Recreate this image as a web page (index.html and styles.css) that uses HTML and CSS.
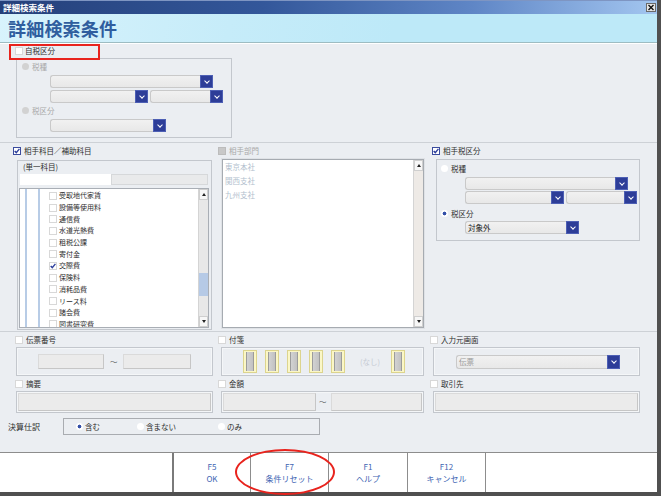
FILE: index.html
```html
<!DOCTYPE html>
<html lang="ja">
<head>
<meta charset="utf-8">
<title>詳細検索条件</title>
<link rel="stylesheet" href="styles.css">
</head>
<body>
<div class="window">
  <div class="titlebar">
    <span class="tb-text">詳細検索条件</span>
    <span class="close"><svg width="8" height="7" viewBox="0 0 8 7"><path d="M1.5 1 L6.5 6 M6.5 1 L1.5 6" stroke="#111" stroke-width="1.4"/></svg></span>
  </div>
  <div class="header"><h1>詳細検索条件</h1></div>
  <div class="body">
    <section class="sec1">
      <div class="chk-row"><i class="cb"></i><span>自税区分</span></div>
      <div class="grp grp1">
        <div class="radio-row"><i class="rb dis"></i><span class="dis-t">税種</span></div>
        <div class="sel-row mt3"><div class="sel w163"><span class="sv"></span><i class="dd"></i></div></div>
        <div class="sel-row mt2"><div class="sel w98"><span class="sv"></span><i class="dd"></i></div><div class="sel w73"><span class="sv"></span><i class="dd"></i></div></div>
        <div class="radio-row mt2"><i class="rb dis"></i><span class="dis-t">税区分</span></div>
        <div class="sel-row mt3"><div class="sel w116"><span class="sv"></span><i class="dd"></i></div></div>
      </div>
      <div class="redbox"></div>
    </section>

    <section class="sec2">
      <div class="col c1">
        <div class="col-head"><svg class="cbx" width="8" height="8" viewBox="0 0 8 8"><rect x=".5" y=".5" width="7" height="7" fill="#fff" stroke="#3b4c9e"/><path d="M1.7 3.9 3.3 5.6 6.4 1.9" fill="none" stroke="#2d3f9c" stroke-width="1.4"/></svg><span>相手科目／補助科目</span></div>
        <div class="grp kamoku">
          <div class="tanitsu">(単一科目)</div>
          <div class="inrow"><span class="in-white"></span><span class="in-gray"></span></div>
          <div class="list1">
            <div class="items">
              <div class="item"><i class="cb"></i><span>受取地代家賃</span></div>
              <div class="item"><i class="cb"></i><span>設備等使用料</span></div>
              <div class="item"><i class="cb"></i><span>通信費</span></div>
              <div class="item"><i class="cb"></i><span>水道光熱費</span></div>
              <div class="item"><i class="cb"></i><span>租税公課</span></div>
              <div class="item"><i class="cb"></i><span>寄付金</span></div>
              <div class="item"><svg class="cbx" width="8" height="8" viewBox="0 0 8 8"><rect x=".5" y=".5" width="7" height="7" fill="#fff" stroke="#d6d6d6"/><path d="M1.7 3.9 3.3 5.6 6.4 1.9" fill="none" stroke="#2d3f9c" stroke-width="1.4"/></svg><span>交際費</span></div>
              <div class="item"><i class="cb"></i><span>保険料</span></div>
              <div class="item"><i class="cb"></i><span>消耗品費</span></div>
              <div class="item"><i class="cb"></i><span>リース料</span></div>
              <div class="item"><i class="cb"></i><span>諸会費</span></div>
              <div class="item"><i class="cb"></i><span>図書研究費</span></div>
            </div>
            <div class="vs">
              <span class="vs-btn"><i class="up"></i></span>
              <span class="thumb"></span>
              <span class="vs-btn down"><i class="dn"></i></span>
            </div>
          </div>
        </div>
      </div>

      <div class="col c2">
        <div class="col-head"><i class="cb dis"></i><span class="dis-t">相手部門</span></div>
        <div class="bumon">
          <div class="items2">
            <div class="item2">東京本社</div>
            <div class="item2">関西支社</div>
            <div class="item2">九州支社</div>
          </div>
          <div class="vs vs2">
            <span class="vs-btn"><i class="up"></i></span>
            <span class="vs-btn down"><i class="dn"></i></span>
          </div>
        </div>
      </div>

      <div class="col c3">
        <div class="col-head"><svg class="cbx" width="8" height="8" viewBox="0 0 8 8"><rect x=".5" y=".5" width="7" height="7" fill="#fff" stroke="#3b4c9e"/><path d="M1.7 3.9 3.3 5.6 6.4 1.9" fill="none" stroke="#2d3f9c" stroke-width="1.4"/></svg><span>相手税区分</span></div>
        <div class="grp zeiku">
          <div class="radio-row"><i class="rb"></i><span>税種</span></div>
          <div class="sel-row ml24 mt3"><div class="sel w163"><span class="sv"></span><i class="dd"></i></div></div>
          <div class="sel-row ml24 mt1"><div class="sel w99"><span class="sv"></span><i class="dd"></i></div><div class="sel w71"><span class="sv"></span><i class="dd"></i></div></div>
          <div class="radio-row mt4"><i class="rb on"></i><span>税区分</span></div>
          <div class="sel-row ml24 mt2"><div class="sel w114"><span class="sv dark">対象外</span><i class="dd"></i></div></div>
        </div>
      </div>
    </section>

    <section class="sec3">
      <div class="cell k1">
        <div class="lbl"><i class="cb"></i><span>伝票番号</span></div>
        <div class="box tall pl21">
          <span class="inp w66"></span><span class="tl">～</span><span class="inp w68"></span>
        </div>
      </div>
      <div class="cell k2">
        <div class="lbl"><i class="cb"></i><span>付箋</span></div>
        <div class="box tall pl21 tags">
          <span class="tag"><i></i></span>
          <span class="tag"><i></i></span>
          <span class="tag"><i></i></span>
          <span class="tag"><i></i></span>
          <span class="tag"><i></i></span>
          <span class="nashi">(なし)</span>
          <span class="tag"><i></i></span>
        </div>
      </div>
      <div class="cell k3">
        <div class="lbl"><i class="cb"></i><span>入力元画面</span></div>
        <div class="box tall pl22">
          <div class="sel w164 h14"><span class="sv grayt">伝票</span><i class="dd"></i></div>
        </div>
      </div>

      <div class="cell k1">
        <div class="lbl"><i class="cb"></i><span>摘要</span></div>
        <div class="box short p1"><span class="inp full"></span></div>
      </div>
      <div class="cell k2">
        <div class="lbl"><i class="cb"></i><span>金額</span></div>
        <div class="box short pl1">
          <span class="inp w93 h18"></span><span class="tl tl2">～</span><span class="inp w91 h18"></span>
        </div>
      </div>
      <div class="cell k3">
        <div class="lbl"><i class="cb"></i><span>取引先</span></div>
        <div class="box short p1"><span class="inp full"></span></div>
      </div>
    </section>

    <section class="kessan">
      <span class="k-lbl">決算仕訳</span>
      <div class="k-box">
        <span class="k-opt o1"><i class="rb on"></i><span>含む</span></span>
        <span class="k-opt o2"><i class="rb"></i><span>含まない</span></span>
        <span class="k-opt"><i class="rb"></i><span>のみ</span></span>
      </div>
    </section>
  </div>

  <div class="footer">
    <div class="f-left"></div>
    <div class="fk first"><span>F5</span><span>OK</span></div>
    <div class="fk"><span>F7</span><span>条件リセット</span></div>
    <div class="fk wide"><span>F1</span><span>ヘルプ</span></div>
    <div class="fk"><span>F12</span><span>キャンセル</span></div>
    <div class="f-right"></div>
  </div>

  <div class="ellipse"></div>
</div>
</body>
</html>
```

FILE: styles.css
```css
* { box-sizing: border-box; margin: 0; padding: 0; }
html, body { margin: 0; background: #ebeef2; }
body {
  font-family: "Noto Sans CJK JP", "Noto Sans", sans-serif;
  font-size: 7.5px;
  color: #2e2e2e;
  line-height: 1;
}
i { display: block; font-style: normal; flex: none; }

.window {
  position: relative;
  width: 661px;
  height: 496px;
  overflow: hidden;
  display: flex;
  flex-direction: column;
  background: #ebeef2;
  border-right: 4px solid #505050;
}

/* title bar */
.titlebar {
  flex: none;
  height: 14px;
  display: flex;
  align-items: center;
  justify-content: space-between;
  padding: 0 1px 0 3px;
  background: linear-gradient(to right, #25407a 0%, #33579a 40%, #5f86c6 72%, #a3c6f0 100%);
  border-top: 1px solid #7e95c2;
}
.tb-text { color: #fff; font-size: 8.5px; font-weight: 700; }
.close {
  width: 10px; height: 9px;
  display: flex; align-items: center; justify-content: center;
  background: #e6e6e6; border: 1px solid #6a6a6a;
}

/* header */
.header {
  flex: none;
  height: 29px;
  border-bottom: 1px solid #9dbcc2;
  background: linear-gradient(100deg, #d8f3fc 0%, #c6ecf9 35%, #bde9f8 60%);
}
.header h1 {
  font-size: 18px;
  font-weight: 700;
  color: #2f5d9e;
  line-height: 28px;
  padding-left: 8px;
  letter-spacing: 0.2px;
}

.body {
  flex: 1;
  border-top: 1px solid #fff;
  display: flex;
  flex-direction: column;
}

/* generic controls */
.cb { width: 8px; height: 8px; background: #fff; border: 1px solid #d8d8d8; }
.cb.dis { background: #c8c8c8; border-color: #bcbcbc; }
.cbx { flex: none; display: block; }
.rb { width: 7px; height: 7px; border-radius: 50%; background: #fff; }
.rb.dis { background: #d2d2d2; }
.rb.on { background: radial-gradient(circle, #3450a8 0 1.6px, #fff 2.2px); }
.dis-t { color: #a9a9a9; }

.grp { border: 1px solid #c3c7cd; }

.radio-row { display: flex; align-items: center; gap: 3px; height: 11px; }
.sel-row { display: flex; gap: 2px; height: 13px; margin-left: 28px; }
.ml24 { margin-left: 24px; }
.mt1 { margin-top: 1px; }
.mt2 { margin-top: 2px; }
.mt3 { margin-top: 3px; }
.mt4 { margin-top: 4px; }

.sel { display: flex; height: 13px; flex: none; }
.sel.h14 { height: 14px; }
.sv {
  flex: 1;
  border: 1px solid #c9c9c9;
  border-right: 0;
  border-radius: 3px 0 0 3px;
  background: linear-gradient(#f1f1f1, #e8e8e8);
  display: flex; align-items: center;
  padding-left: 2px;
}
.sv.dark { color: #222; }
.sv.grayt { color: #999; }
.dd {
  width: 13px;
  background: #2d3d98;
  border: 1px solid #4d5fb4;
  display: flex; align-items: center; justify-content: center;
}
.dd::after {
  content: "";
  width: 3px; height: 3px;
  border-right: 1.2px solid #fff;
  border-bottom: 1.2px solid #fff;
  transform: rotate(45deg);
  margin-top: -2px;
}
.w163 { width: 163px; }
.w164 { width: 164px; }
.w98 { width: 98px; }
.w99 { width: 99px; }
.w73 { width: 73px; }
.w71 { width: 71px; }
.w116 { width: 116px; }
.w114 { width: 114px; }

/* section 1 */
.sec1 { position: relative; height: 98px; flex: none; }
.chk-row { display: flex; align-items: center; gap: 2px; height: 14px; padding-left: 15px; }
.grp1 { margin-left: 16px; width: 216px; height: 80px; padding: 2px 0 0 5px; }
.redbox {
  position: absolute;
  left: 9px; top: 0;
  width: 91px; height: 16px;
  border: 2px solid #e8231d;
}

/* section 2 */
.sec2 {
  flex: none;
  height: 189px;
  border-top: 1px solid #cdd1d6;
  display: grid;
  grid-template-columns: 213px 212px 1fr;
}
.col-head { height: 16px; display: flex; align-items: center; gap: 3px; }
.c1 { padding-left: 13px; }
.c2 { padding-left: 5px; }
.c3 { padding-left: 7px; }

.kamoku { margin: 1px 0 0 4px; width: 195px; height: 170px; }
.tanitsu { height: 10px; margin-top: 1px; padding-left: 5px; display: flex; align-items: center; }
.inrow { display: flex; margin: 2px 0 0 2px; height: 11px; }
.in-white { width: 91px; background: #fff; }
.in-gray { width: 97px; background: #e9eaeb; border: 1px solid #d6d8da; }
.list1 {
  margin: 3px 0 0 1px;
  width: 190px; height: 140px;
  border: 1px solid #a9aeb5;
  background: #fff;
  display: flex;
}
.items {
  flex: 1;
  padding-top: 1px;
  overflow: hidden;
  background: linear-gradient(to right, transparent 5px, #b8cce6 5px, #b8cce6 7px, transparent 7px, transparent 18px, #b8cce6 18px, #b8cce6 20px, transparent 20px);
}
.item { height: 11.7px; display: flex; align-items: center; gap: 2px; padding-left: 29px; font-size: 7px; }

.vs { width: 10px; flex: none; display: flex; flex-direction: column; background: #e8e8e8; border-left: 1px solid #d4d4d4; }
.vs-btn { height: 11px; flex: none; background: #f7f7f7; border: 1px solid #cfcfcf; display: flex; align-items: center; justify-content: center; }
.vs .down { margin-top: auto; }
.up { width: 0; height: 0; border-left: 2.5px solid transparent; border-right: 2.5px solid transparent; border-bottom: 3px solid #222; }
.dn { width: 0; height: 0; border-left: 2.5px solid transparent; border-right: 2.5px solid transparent; border-top: 3px solid #222; }
.thumb { margin-top: 73px; height: 23px; background: #b6cae6; flex: none; }

.bumon {
  margin-left: 4px;
  width: 202px; height: 169px;
  border: 1px solid #a6abb1;
  box-shadow: inset 0 0 0 1px #fff, 0 0 0 1px #dfe2e6;
  background: #fff;
  display: flex;
}
.items2 { flex: 1; padding-left: 2px; }
.item2 { height: 14px; display: flex; align-items: center; color: #b3bfce; }
.vs2 { background: #eeeae6; }

.zeiku { margin-left: 4px; width: 204px; height: 82px; padding: 3px 0 0 4px; }

/* section 3 */
.sec3 {
  flex: none;
  border-top: 1px solid #cdd1d6;
  display: grid;
  grid-template-columns: 216px 212px 1fr;
}
.cell { display: flex; flex-direction: column; }
.lbl { height: 15px; display: flex; align-items: center; gap: 3px; }
.k1 .lbl { padding-left: 15px; }
.k1 .box { margin-left: 16px; width: 197px; }
.k2 .lbl { padding-left: 2px; }
.k2 .box { margin-left: 5px; width: 203px; }
.k3 .lbl { padding-left: 2px; }
.k3 .box { margin-left: 5px; width: 207px; }

.box { border: 1px solid #c3c7cd; display: flex; align-items: center; box-shadow: inset 0 0 0 1px #f4f6f8; }
.box.tall { height: 29px; }
.box.short { height: 22px; }
.pl21 { padding-left: 21px; }
.pl22 { padding-left: 22px; }
.pl1 { padding-left: 1px; }
.p1 { padding: 1px; }

.inp {
  height: 15px;
  flex: none;
  background: #ebebeb;
  border: 1px solid #dadada;
  border-right-color: #c6c6c6;
  border-bottom-color: #c6c6c6;
}
.inp.full { flex: 1; height: 18px; }
.inp.h18 { height: 18px; }
.w66 { width: 66px; }
.w68 { width: 68px; }
.w93 { width: 93px; }
.w91 { width: 91px; }
.tl { margin: 0 5px 0 6px; color: #555; }
.tl2 { margin: 0 4px 0 3px; }

.tags { gap: 8px; }
.tag {
  width: 14px; height: 23px;
  flex: none;
  background: #fbf7c6;
  border: 1px solid #dcd48e;
  display: flex; align-items: center; justify-content: center;
}
.tag i {
  width: 8px; height: 19px;
  background: linear-gradient(to right, #9c9c9c 0 1px, #d2d2d2 1px, #c2c2c2 7px, #9c9c9c 7px);
}
.nashi { color: #c6cbd3; margin: 0 1px 0 7px; width: 22px; }

/* kessan */
.kessan { flex: none; margin-top: 5px; height: 17px; display: flex; align-items: center; }
.k-lbl { width: 63px; padding-left: 8px; font-size: 8px; }
.k-box {
  width: 257px; height: 17px;
  border: 1px solid #a9acb1;
  display: flex; align-items: center;
  padding-left: 12px;
}
.k-opt { display: flex; align-items: center; gap: 2px; }
.o1 { width: 61px; }
.o2 { width: 81px; }

/* footer */
.footer {
  flex: none;
  height: 44px;
  background: #fff;
  border-top: 1px solid #8d8d8d;
  border-bottom: 4px solid #505050;
  display: flex;
}
.f-left { width: 172px; }
.fk {
  width: 78px;
  border-left: 1px solid #8d8d8d;
  display: flex; flex-direction: column; align-items: center; justify-content: center;
  gap: 4px;
  color: #3e64b2;
  font-size: 8px;
}
.fk.first { border-left: 2px solid #7a7a7a; }
.fk.wide { width: 79px; }
.f-right { flex: 1; border-left: 1px solid #8d8d8d; }

.ellipse {
  position: absolute;
  left: 235px; top: 449px;
  width: 100px; height: 46px;
  border: 2px solid #e8231d;
  border-radius: 50%;
}
```
